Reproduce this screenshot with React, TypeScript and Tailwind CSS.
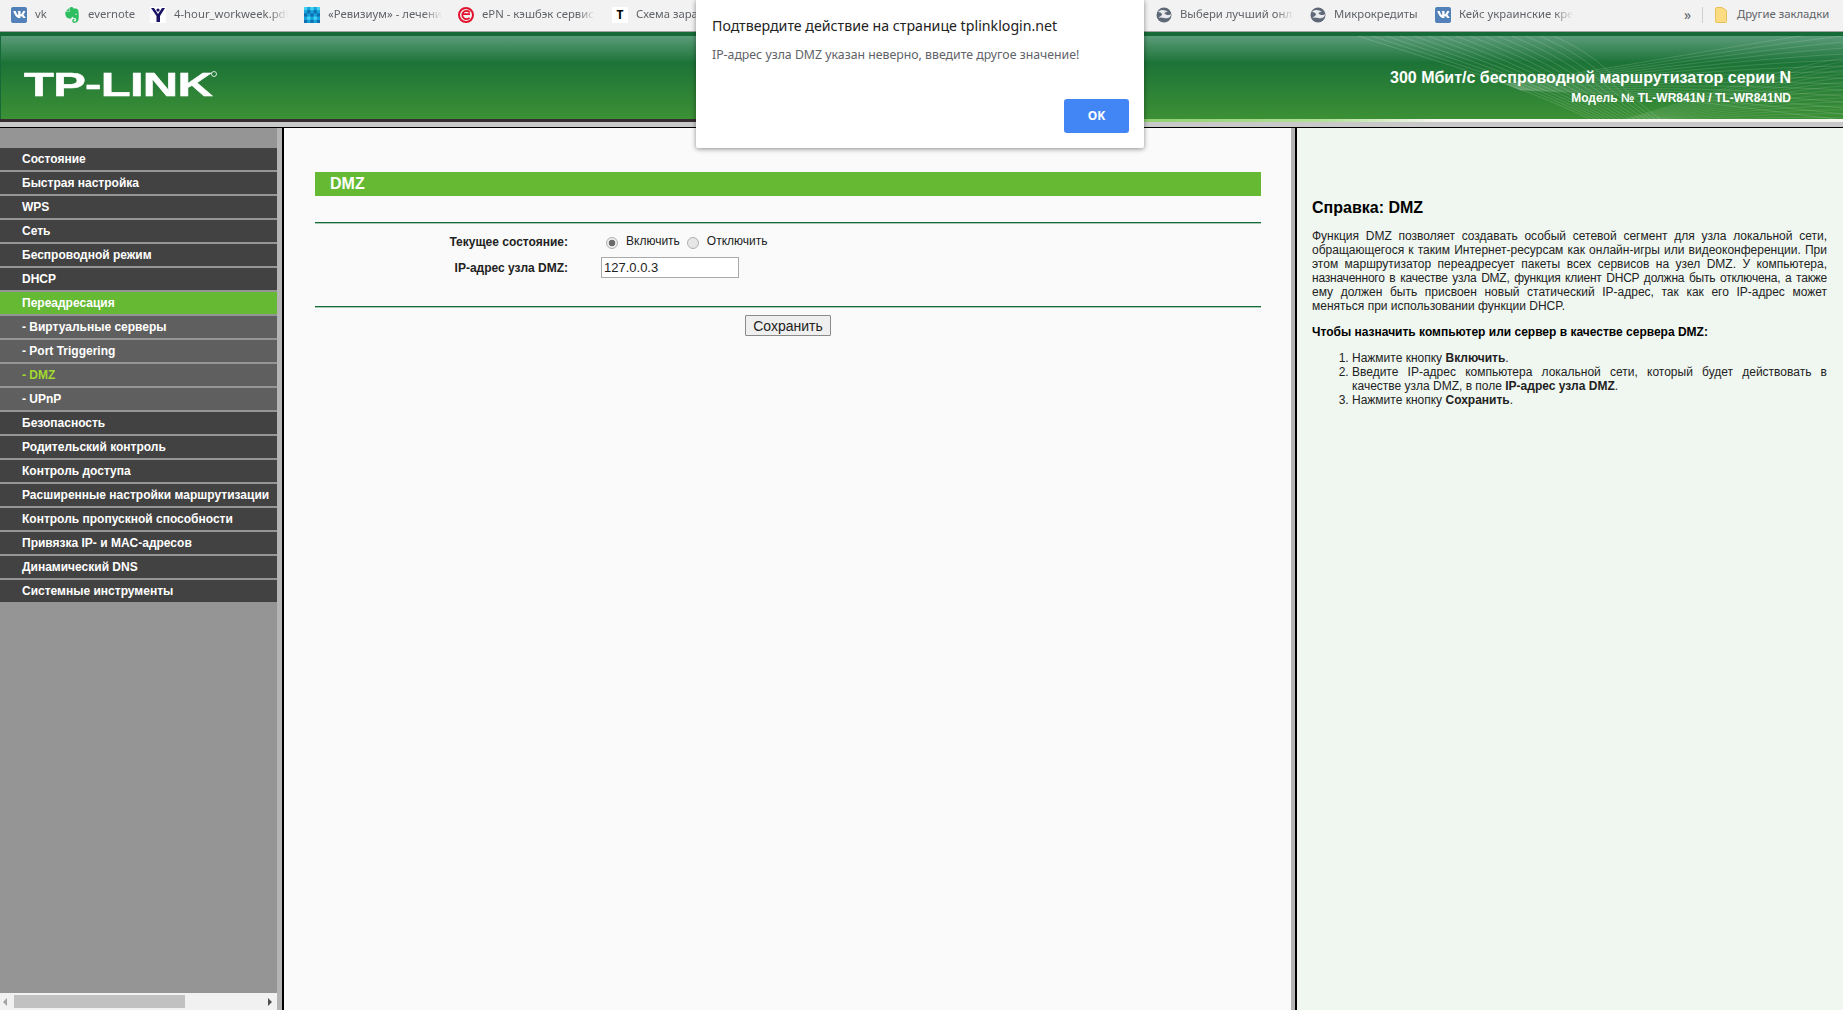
import { FaVk } from "react-icons/fa";
import { SiEvernote } from "react-icons/si";

const menuItems = [
  { label: "Состояние" },
  { label: "Быстрая настройка" },
  { label: "WPS" },
  { label: "Сеть" },
  { label: "Беспроводной режим" },
  { label: "DHCP" },
  { label: "Переадресация", active: true },
  { label: "- Виртуальные серверы", sub: true },
  { label: "- Port Triggering", sub: true },
  { label: "- DMZ", sub: true, current: true },
  { label: "- UPnP", sub: true },
  { label: "Безопасность" },
  { label: "Родительский контроль" },
  { label: "Контроль доступа" },
  { label: "Расширенные настройки маршрутизации" },
  { label: "Контроль пропускной способности" },
  { label: "Привязка IP- и MAC-адресов" },
  { label: "Динамический DNS" },
  { label: "Системные инструменты" },
];

function VkIcon() {
  return (
    <span className="flex h-4 w-4 items-center justify-center rounded-[2px] bg-[#5181b8]">
      <FaVk className="h-[13px] w-[13px] text-white" />
    </span>
  );
}

function PersonIcon() {
  return (
    <svg width="16" height="16" viewBox="0 0 16 16" className="bg-white">
      <path d="M1 1 L4 1 L8 7 L12 1 L15 1 L10 9 L10 15 L6.5 15 L6.5 9 Z" fill="#1b1464" />
      <circle cx="8" cy="3" r="1.6" fill="#1b1464" />
    </svg>
  );
}

function GridIcon() {
  const cells = [0, 1, 2, 3, 4];
  return (
    <svg width="16" height="16" viewBox="0 0 15 15">
      <rect width="15" height="15" fill="#17a3dc" />
      {cells.map((r) =>
        cells.map((c) =>
          (r + c) % 2 === 0 ? (
            <rect key={`${r}-${c}`} x={c * 3} y={r * 3} width="3" height="3" fill={r % 3 ? "#0f6fb0" : "#45d3f2"} />
          ) : null
        )
      )}
    </svg>
  );
}

function EpnIcon() {
  return (
    <svg width="16" height="16" viewBox="0 0 16 16">
      <circle cx="8" cy="8" r="7" fill="none" stroke="#e2122d" strokeWidth="2" />
      <path d="M4 7.2 H12 M11.6 10.8 A4.2 4.2 0 1 1 11.8 5.4" fill="none" stroke="#e2122d" strokeWidth="1.7" />
    </svg>
  );
}

function GlobeIcon() {
  return (
    <svg width="16" height="16" viewBox="0 0 16 16">
      <circle cx="8" cy="8" r="7.5" fill="#5f6876" />
      <path d="M2 5 C5 2 9 3 12 5 C9 5 7 6 10 7.5 C12 8.5 14 8 15 7 C15 11 11 12 8 11 C6 10.4 4 10 2.5 11 C4 9 6 8.6 6 7.5 C6 6 4 5 2 5 Z" fill="#e8eaee" />
    </svg>
  );
}

function FolderIcon() {
  return (
    <svg width="12" height="16" viewBox="0 0 12 16">
      <path d="M0.5 1.5 a1 1 0 0 1 1 -1 H7 l4.5 3 V14.5 a1 1 0 0 1 -1 1 H1.5 a1 1 0 0 1 -1 -1 Z" fill="#fcdc82" stroke="#e6c15a" />
    </svg>
  );
}

function Bookmark({ icon, label, className }: { icon: React.ReactNode; label: string; className: string }) {
  return (
    <div className={`flex shrink-0 items-center gap-[8px] ${className}`}>
      <span className="flex w-4 shrink-0 justify-center">{icon}</span>
      <span className="max-w-[114px] min-w-0 flex-1 overflow-hidden whitespace-nowrap [mask-image:linear-gradient(to_right,black_84%,transparent)]">
        {label}
      </span>
    </div>
  );
}

function BookmarksBar() {
  return (
    <div className="flex h-8 items-center border-b border-[#a3a3a3] bg-[#f2f2f2] pb-[2px] pl-[11px] font-['Noto_Sans',sans-serif] text-[11.3px] text-[#5f6368]">
      <Bookmark icon={<VkIcon />} label="vk" className="w-[53px]" />
      <Bookmark icon={<SiEvernote className="h-4 w-4 text-[#2dbe60]" />} label="evernote" className="w-[86px]" />
      <Bookmark icon={<PersonIcon />} label="4-hour_workweek.pdf" className="w-[154px]" />
      <Bookmark icon={<GridIcon />} label="«Ревизиум» - лечение" className="w-[154px]" />
      <Bookmark icon={<EpnIcon />} label="ePN - кэшбэк сервис" className="w-[154px]" />
      <Bookmark
        icon={<span className="flex h-4 w-4 items-center justify-center bg-white text-[12px] font-bold text-black">T</span>}
        label="Схема заработка"
        className="w-[544px]"
      />
      <Bookmark icon={<GlobeIcon />} label="Выбери лучший онлайн" className="w-[154px]" />
      <Bookmark icon={<GlobeIcon />} label="Микрокредиты" className="w-[125px]" />
      <Bookmark icon={<VkIcon />} label="Кейс украинские кредиты" className="w-[148px]" />
      <span className="ml-[101px] w-[18px] text-[14px] leading-none">»</span>
      <span className="h-4 w-px bg-[#cfcfcf]" />
      <div className="ml-[12px] flex items-center gap-[10px]">
        <FolderIcon />
        <span className="whitespace-nowrap">Другие закладки</span>
      </div>
    </div>
  );
}

function HeaderArt() {
  const left = Array.from({ length: 15 }, (_, i) => i);
  const right = Array.from({ length: 16 }, (_, i) => i);
  return (
    <svg className="absolute top-0 right-0" width="503" height="83" viewBox="0 0 503 83" fill="none" stroke="#ffffff" strokeWidth="0.7">
      {left.map((i) => (
        <path key={`a${i}`} strokeOpacity="0.22" d={`M${18 + i * 14} 0 C${110 + i * 12} 30 ${170 + i * 7} 45 ${250 + i * 5} 83`} />
      ))}
      {right.map((i) => (
        <path key={`b${i}`} strokeOpacity="0.2" d={`M503 ${-6 + i * 6} C${400 - i * 2} ${8 + i * 4} ${290 + i * 3} ${30 + i * 2} ${165 + i} ${48 + i * 0.4}`} />
      ))}
      {right.map((i) => (
        <path key={`c${i}`} strokeOpacity="0.16" d={`M503 ${22 + i * 4} C${430} ${34 + i * 3} ${330} ${72 + i} ${285 + i * 3} 83`} />
      ))}
    </svg>
  );
}

function RouterHeader() {
  return (
    <header className="shrink-0">
      <div className="h-1 bg-[#166a38]" />
      <div className="relative flex h-[83px] items-start justify-between border-l border-[#166a38] bg-[linear-gradient(#5b9c7a_0%,#1c7337_32%,#3c9035_100%)] pl-[23px]">
        <HeaderArt />
        <div className="relative mt-[33px] flex items-start">
          <span className="inline-block origin-left scale-x-[1.44] text-[34px] leading-[30px] font-bold tracking-[-0.5px] text-white [-webkit-text-stroke:0.5px_white]">
            TP-LINK
          </span>
        </div>
        <span className="absolute top-[35px] left-[210px] h-[6px] w-[6px] rounded-full border border-white/80" />
        <div className="relative mt-[32px] mr-[52px] text-right font-bold text-white">
          <div className="text-[16px] leading-5">300 Мбит/с беспроводной маршрутизатор серии N</div>
          <div className="mt-[2px] text-[12px] leading-4">Модель № TL-WR841N / TL-WR841ND</div>
        </div>
      </div>
      <div className="h-[3px] bg-[linear-gradient(to_right,#352e2e_0%,#352e2e_38%,#8fd070_62%,#b3e09c_72%,#f6f6f0_78%,#f6f6f0_100%)]" />
      <div className="h-[6px] border-b border-black bg-[#c9c9c9]" />
    </header>
  );
}

function Sidebar() {
  return (
    <aside className="flex w-[284px] shrink-0 border-r-2 border-black">
      <div className="flex min-w-0 flex-1 flex-col bg-[#959595]">
        <nav className="flex flex-1 flex-col gap-[2px] pt-5">
          {menuItems.map((item) => (
            <div
              key={item.label}
              className={`flex h-[22px] items-center pl-[22px] text-[12px] font-bold ${
                item.active ? "bg-[#66b933] text-white" : item.sub ? "bg-[#5f5f5f]" : "bg-[#424242]"
              } ${item.current ? "text-[#a2d92f]" : "text-white"}`}
            >
              {item.label}
            </div>
          ))}
        </nav>
        <div className="flex h-[17px] items-center bg-[#f1f1f1]">
          <span className="ml-[3px] h-0 w-0 border-y-[4px] border-r-[4px] border-y-transparent border-r-[#a3a3a3]" />
          <span className="ml-[7px] h-[13px] w-[171px] bg-[#c1c1c1]" />
          <span className="mr-[5px] ml-auto h-0 w-0 border-y-[4px] border-l-[4px] border-y-transparent border-l-[#505050]" />
        </div>
      </div>
      <div className="w-[5px] bg-[#b4b4b4]" />
    </aside>
  );
}

function DmzForm() {
  return (
    <main className="flex w-[1013px] shrink-0 border-r-2 border-black">
      <div className="min-w-0 flex-1 bg-[#fafafa] pt-11 pr-[30px] pl-[31px]">
        <h2 className="flex h-6 items-center bg-[#66b933] pl-[15px] text-[16px] font-bold text-white">DMZ</h2>
        <div className="mt-[26px] h-[2px] bg-[linear-gradient(#176a38_50%,#a9cbb6_50%)]" />
        <div className="mt-[6px] flex h-[23px] items-center text-[12px]">
          <label className="w-[253px] text-right font-bold text-[#222]">Текущее состояние:</label>
          <input
            type="radio"
            name="dmz"
            defaultChecked
            className="mt-[2px] ml-[38px] h-3 w-3 appearance-none rounded-full border border-[#b0b0b0] bg-[radial-gradient(circle,#6a6a6a_0,#6a6a6a_3px,#ececec_3.6px)]"
          />
          <span className="mb-[2px] ml-2 text-[#222]">Включить</span>
          <input
            type="radio"
            name="dmz"
            className="mt-[2px] ml-[7px] h-3 w-3 appearance-none rounded-full border border-[#b0b0b0] bg-[#e6e6e6]"
          />
          <span className="mb-[2px] ml-2 text-[#222]">Отключить</span>
        </div>
        <div className="mt-[4px] flex h-[21px] items-center text-[12px]">
          <label className="w-[253px] text-right font-bold text-[#222]">IP-адрес узла DMZ:</label>
          <input
            type="text"
            defaultValue="127.0.0.3"
            className="ml-[33px] h-[21px] w-[138px] border border-[#a9a9a9] bg-white px-[2px] text-[13px] text-[#222] outline-none"
          />
        </div>
        <div className="mt-[28px] h-[2px] bg-[linear-gradient(#176a38_50%,#a9cbb6_50%)]" />
        <div className="mt-[7px] flex justify-center">
          <button className="h-[21px] w-[86px] rounded-[1px] border border-[#8a8a8a] bg-[#efefef] text-[14px] leading-none text-[#222]">
            Сохранить
          </button>
        </div>
      </div>
      <div className="w-1 bg-[#b4b4b4]" />
    </main>
  );
}

function HelpPanel() {
  return (
    <section className="min-w-0 flex-1 bg-[#f0f7f1] pt-[70px] pr-4 pl-[15px] text-[12px] leading-[14px] text-[#222]">
      <h3 className="text-[16px] leading-5 font-bold text-black">Справка: DMZ</h3>
      <p className="mt-[11px] text-justify">
        Функция DMZ позволяет создавать особый сетевой сегмент для узла локальной сети, обращающегося к таким
        Интернет-ресурсам как онлайн-игры или видеоконференции. При этом маршрутизатор переадресует пакеты всех
        сервисов на узел DMZ. У компьютера,{" "}
        <span className="tracking-[-0.22px]">
          назначенного в качестве узла DMZ, функция клиент DHCP должна быть отключена, а также
        </span>{" "}
        ему должен быть присвоен новый статический IP-адрес, так как его IP-адрес может меняться при использовании
        функции DHCP.
      </p>
      <p className="mt-3 font-bold text-black">Чтобы назначить компьютер или сервер в качестве сервера DMZ:</p>
      <ol className="mt-3 list-decimal pl-10 text-justify">
        <li>
          Нажмите кнопку <b>Включить</b>.
        </li>
        <li>
          Введите IP-адрес компьютера локальной сети, который будет действовать в качестве узла DMZ, в поле{" "}
          <b>IP-адрес узла DMZ</b>.
        </li>
        <li>
          Нажмите кнопку <b>Сохранить</b>.
        </li>
      </ol>
    </section>
  );
}

function ConfirmDialog() {
  return (
    <div className="absolute top-0 left-[696px] h-[148px] w-[448px] rounded-b-[2px] bg-white pt-[16px] pr-[15px] pl-4 font-['Noto_Sans',sans-serif] shadow-[0_1px_5px_rgba(0,0,0,0.45)]">
      <div className="text-[14.2px] leading-[20px] text-[#222]">Подтвердите действие на странице tplinklogin.net</div>
      <div className="mt-[10px] text-[12.3px] leading-[18px] text-[#5f6368]">
        IP-адрес узла DMZ указан неверно, введите другое значение!
      </div>
      <div className="mt-[35px] flex justify-end">
        <button className="h-[34px] w-[65px] rounded-[3px] bg-[#4285f4] text-[12px] font-bold text-white">OK</button>
      </div>
    </div>
  );
}

export default function App() {
  return (
    <div className="relative flex h-[1010px] w-[1843px] flex-col overflow-hidden bg-white font-['Liberation_Sans',Arial,sans-serif]">
      <BookmarksBar />
      <RouterHeader />
      <div className="flex min-h-0 flex-1">
        <Sidebar />
        <DmzForm />
        <HelpPanel />
      </div>
      <ConfirmDialog />
    </div>
  );
}
